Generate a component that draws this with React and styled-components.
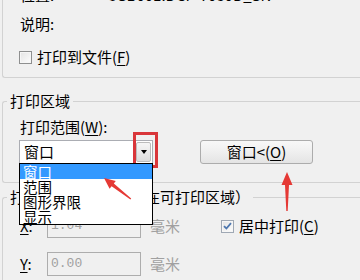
import React from 'react';
import styled, { createGlobalStyle } from 'styled-components';

const Global = createGlobalStyle`
  html, body { margin: 0; padding: 0; background: #f0f0f0; overflow: hidden; }
  body {
    font-family: "Noto Sans CJK SC", "Noto Sans", sans-serif;
    font-size: 15px;
    color: #000;
  }
  * { box-sizing: border-box; }
`;

const Page = styled.div`
  position: relative;
  width: 360px;
  height: 280px;
  overflow: hidden;
  padding-left: 2px;
`;

const Stack = styled.div`
  margin-top: -16px;
  display: flex;
  flex-direction: column;
`;

const Group = styled.fieldset`
  margin: ${(p) => p.$mt || 0}px 0 0 0;
  padding: 0;
  min-width: 0;
  border: 1px solid #d2d2d2;
  border-right: none;
  border-radius: 3px 0 0 3px;
`;

const Legend = styled.legend`
  margin-left: 4px;
  padding: 0 3px;
  height: 20px;
  line-height: 20px;
  font-size: 15px;
  white-space: nowrap;
`;

const Body = styled.div`
  display: flex;
  flex-direction: column;
  padding: ${(p) => p.$pt || 0}px 0 ${(p) => p.$pb || 0}px 16px;
`;

const Row = styled.div`
  display: flex;
  align-items: center;
  height: ${(p) => p.$h || 20}px;
  line-height: 20px;
  margin-top: ${(p) => p.$mt || 0}px;
  white-space: nowrap;
`;

const Label = styled.span`
  display: inline-block;
  margin-left: 1px;
  width: ${(p) => (p.$w ? `${p.$w}px` : 'auto')};
  flex: none;
`;

const Value = styled.span`
  color: #000;
`;

const Key = styled.span`
  text-decoration: underline;
  text-underline-offset: 2px;
`;

const Box = styled.span`
  flex: none;
  width: 13px;
  height: 13px;
  border: 1px solid ${(p) => (p.$checked ? '#9fa8b4' : '#8e8f8f')};
  background: linear-gradient(135deg, #e4e4e4 0%, #fdfdfd 100%);
  box-shadow: inset 0 0 0 1px #f6f6f6;
  display: inline-flex;
  align-items: center;
  justify-content: center;
  margin-right: 5px;
  margin-left: ${(p) => p.$ml || 0}px;
`;

const Combo = styled.div`
  position: relative;
  flex: none;
  width: 134px;
  height: 24px;
  border: 1px solid #abadb3;
  background: #fff;
  display: flex;
  align-items: center;
`;

const ComboText = styled.span`
  flex: 1;
  padding-left: 4px;
  line-height: 20px;
`;

const DropBtn = styled.span`
  flex: none;
  width: 15px;
  height: 20px;
  margin-right: 1px;
  border: 1px solid #bcbcbc;
  border-radius: 2px;
  background: linear-gradient(#f6f6f6, #dcdcdc);
  display: flex;
  align-items: center;
  justify-content: center;
`;

const Tri = styled.span`
  width: 0;
  height: 0;
  border-left: 3.5px solid transparent;
  border-right: 3.5px solid transparent;
  border-top: 4px solid #000;
`;

const Highlight = styled.span`
  position: absolute;
  left: 113px;
  top: -9px;
  width: 25px;
  height: 36px;
  border: 3px solid #d9363a;
  pointer-events: none;
`;

const List = styled.ul`
  position: absolute;
  z-index: 5;
  left: -1px;
  top: 22px;
  width: 134px;
  margin: 0;
  padding: 0;
  list-style: none;
  border: 1px solid #000;
  background: #fff;
`;

const Item = styled.li`
  height: 15px;
  line-height: 15px;
  padding-left: 3px;
  font-size: 14.5px;
  background: ${(p) => (p.$active ? '#3399ff' : '#fff')};
  color: ${(p) => (p.$active ? '#fff' : '#000')};
`;

const Button = styled.button`
  flex: none;
  margin-left: 47px;
  width: 113px;
  height: 24px;
  padding: 0;
  border: 1px solid #acacac;
  border-radius: 3px;
  background: linear-gradient(#f8f8f8 0%, #efefef 50%, #e4e4e4 100%);
  font-family: inherit;
  font-size: 15px;
  line-height: 20px;
  color: #000;
`;

const Input = styled.div`
  flex: none;
  width: 94px;
  height: 24px;
  border: 1px solid #adadad;
  background: #f0f0f0;
  color: #a0a0a0;
  font-family: "Liberation Mono", monospace;
  font-size: 13px;
  line-height: 22px;
  padding-left: 3px;
`;

const Unit = styled.span`
  flex: none;
  margin-left: 9px;
  color: #a0a0a0;
`;

const Arrows = styled.svg`
  position: absolute;
  left: 0;
  top: 0;
  z-index: 10;
  pointer-events: none;
`;

function Check({ checked, ml }) {
  return (
    <Box $checked={checked} $ml={ml}>
      {checked && (
        <svg width="9" height="8" viewBox="0 0 9 8">
          <path d="M1 4.2 L3.4 6.5 L8 1.2" fill="none" stroke="#4f78b0" strokeWidth="1.8" />
        </svg>
      )}
    </Box>
  );
}

export default function App() {
  return (
    <>
      <Global />
      <Page>
        <Stack>
          <Group>
            <Body $pb={10}>
              <Row>
                <Label $w={87}>位置:</Label>
                <Value>USB001:DCP-7080D_SN</Value>
              </Row>
              <Row $mt={9}>
                <Label>说明:</Label>
              </Row>
              <Row $mt={13}>
                <Check />
                打印到文件(<Key>F</Key>)
              </Row>
            </Body>
          </Group>

          <Group $mt={13}>
            <Legend>打印区域</Legend>
            <Body $pt={6} $pb={18}>
              <Row>
                <Label>打印范围(<Key>W</Key>):</Label>
              </Row>
              <Row $mt={3} $h={24}>
                <Combo>
                  <ComboText>窗口</ComboText>
                  <DropBtn>
                    <Tri />
                  </DropBtn>
                  <Highlight />
                  <List>
                    <Item $active>窗口</Item>
                    <Item>范围</Item>
                    <Item>图形界限</Item>
                    <Item>显示</Item>
                  </List>
                </Combo>
                <Button>
                  窗口&lt;(<Key>O</Key>)
                </Button>
              </Row>
            </Body>
          </Group>

          <Group $mt={4}>
            <Legend>打印偏移（原点设置在可打印区域）</Legend>
            <Body $pt={7} $pb={10}>
              <Row $h={24}>
                <Label $w={27}>
                  <Key>X</Key>:
                </Label>
                <Input>1.04</Input>
                <Unit>毫米</Unit>
                <Check checked ml={41} />
                居中打印(<Key>C</Key>)
              </Row>
              <Row $h={24} $mt={14}>
                <Label $w={27}>
                  <Key>Y</Key>:
                </Label>
                <Input>0.00</Input>
                <Unit>毫米</Unit>
              </Row>
            </Body>
          </Group>
        </Stack>

        <Arrows width="360" height="280" viewBox="0 0 360 280">
          <polygon
            points="104,178 109.6,188.7 111.6,186.2 130.4,199.4 131.2,198.4 113.8,183.4 115.8,180.9"
            fill="#e53935"
          />
          <polygon
            points="287,172 281.5,185 285,185 286.3,211 287.7,211 289,185 292.5,185"
            fill="#e53935"
          />
        </Arrows>
      </Page>
    </>
  );
}
